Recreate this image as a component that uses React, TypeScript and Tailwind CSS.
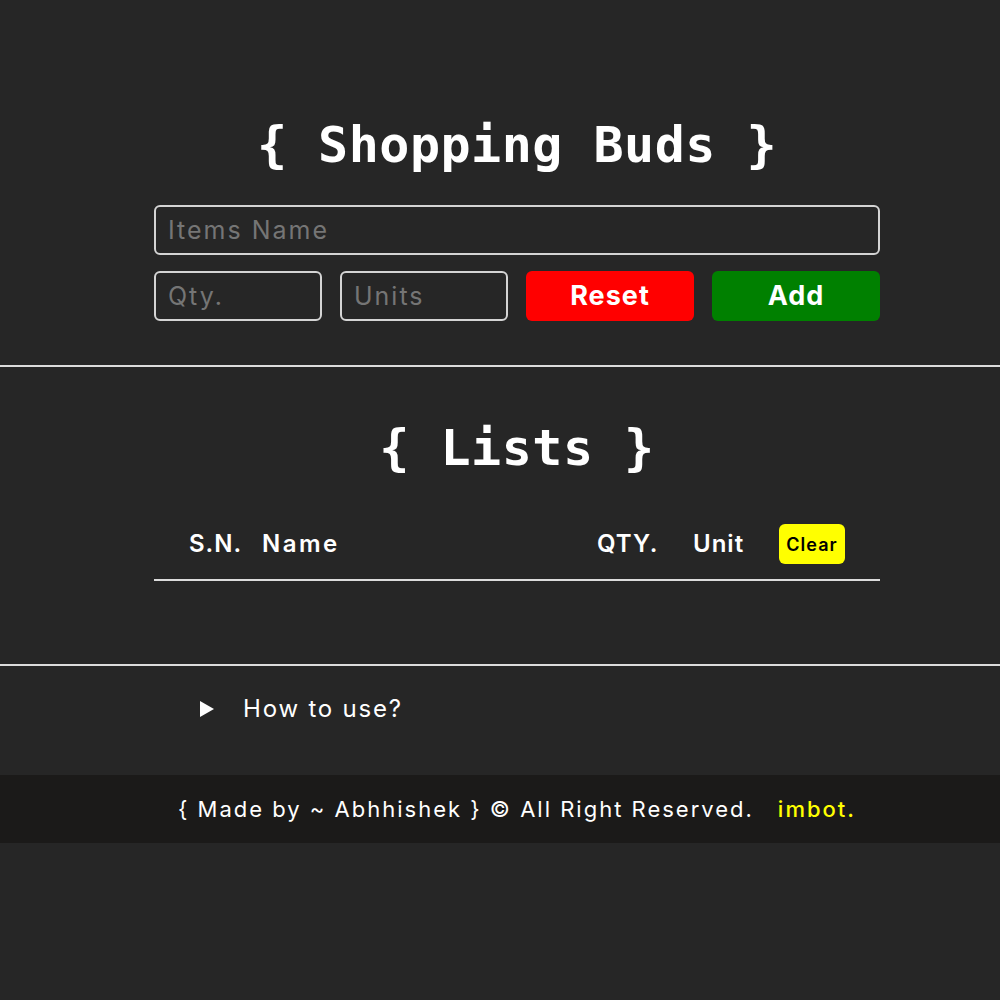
import React from 'react';

const mono = "font-['DejaVu_Sans_Mono','Liberation_Mono',monospace]";
const sans = "font-['Inter','Noto_Sans',sans-serif]";

const Divider = () => <div className="h-[2px] w-full bg-[#dcdcdc]" />;

const App = () => {
  return (
    <div className={`min-h-[1000px] bg-[#262626] text-white ${sans}`}>
      {/* add items */}
      <section className="pl-[34px] pt-[115px] pb-[44px]">
        <div className="mx-auto w-[726px]">
          <h1 className={`${mono} text-center text-[50px] font-bold leading-[60px] tracking-[0.5px]`}>
            {'{ Shopping Buds }'}
          </h1>
          <input
            className="mt-[30px] h-[50px] w-full rounded-md border-2 border-[#d4d4d4] bg-transparent px-3 text-[25px] tracking-[2px] text-white placeholder:text-[#757575] outline-none"
            placeholder="Items Name"
          />
          <div className="mt-4 grid grid-cols-4 gap-[18px]">
            <input
              className="h-[50px] w-full rounded-md border-2 border-[#d4d4d4] bg-transparent px-3 text-[25px] tracking-[2px] placeholder:text-[#757575] outline-none"
              placeholder="Qty."
            />
            <input
              className="h-[50px] w-full rounded-md border-2 border-[#d4d4d4] bg-transparent px-3 text-[25px] tracking-[2px] placeholder:text-[#757575] outline-none"
              placeholder="Units"
            />
            <button className="h-[50px] rounded-md bg-[#ff0000] text-[27px] font-bold tracking-[1px] text-white">Reset</button>
            <button className="h-[50px] rounded-md bg-[#008000] text-[27px] font-bold tracking-[1px] text-white">Add</button>
          </div>
        </div>
      </section>

      <Divider />

      {/* list */}
      <section className="pl-[34px] pt-[51px] pb-[83px]">
        <div className="mx-auto w-[726px]">
          <h1 className={`${mono} text-center text-[50px] font-bold leading-[60px] tracking-[0.5px]`}>
            {'{ Lists }'}
          </h1>
          <div className="mt-[46px] flex items-center border-b-2 border-[#dcdcdc] pb-[15px] pl-[35px] pr-[35px] text-[24px] font-semibold tracking-[1px]">
            <span className="w-[73px]">S.N.</span>
            <span className="flex-1 tracking-[2.5px]">Name</span>
            <span className="w-[96px]">QTY.</span>
            <span className="w-[86px]">Unit</span>
            <button className="h-[40px] w-[66px] rounded-md bg-[#ffff00] text-[18px] font-semibold tracking-[1px] text-black">Clear</button>
          </div>
        </div>
      </section>

      <Divider />

      <section className="pl-[34px] pt-[25px] pb-[48px]">
        <div className="mx-auto w-[726px]">
          <div className="flex items-center pl-[46px] text-[24px] leading-[36px]">
            <svg width="14" height="16" viewBox="0 0 14 16" className="mr-[29px]">
              <polygon points="0,0 14,8 0,16" fill="white" />
            </svg>
            <span className="tracking-[1.8px]">How to use?</span>
          </div>
        </div>
      </section>

      <footer className="flex h-[68px] items-center justify-center bg-[#1b1a19] pl-[34px] text-[22px] tracking-[2px]">
        <span>{'{ Made by ~ Abhhishek } © All Right Reserved.'}</span>
        <span className="ml-6 font-medium text-[#ffff00]">imbot.</span>
      </footer>
    </div>
  );
};

export default App;
